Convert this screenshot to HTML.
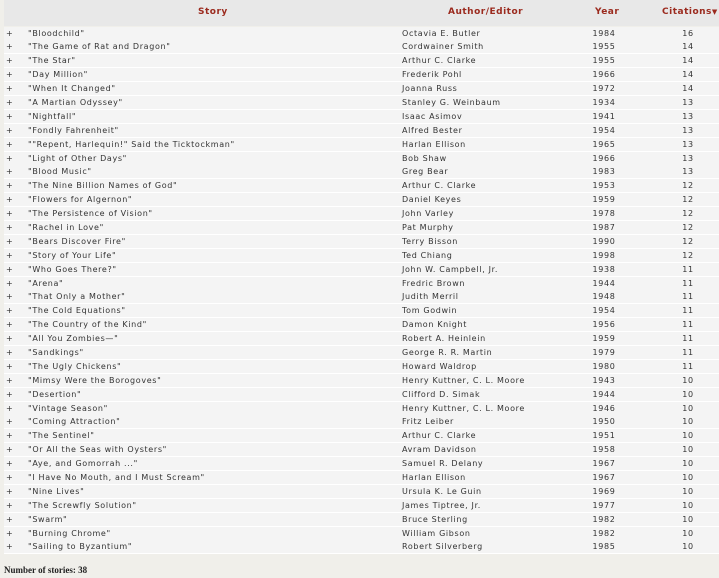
<!DOCTYPE html>
<html><head><meta charset="utf-8"><style>
body{margin:0;width:719px;height:578px;background:#f0efea;overflow:hidden;position:relative;font-family:"DejaVu Sans","Liberation Sans",sans-serif;}
.hd{position:absolute;left:4px;top:0;width:715px;height:26px;background:#e8e8e8;}
.hd span{position:absolute;top:7px;font-size:9px;font-weight:bold;color:#9b2a1e;letter-spacing:0.5px;}
.r{position:absolute;left:4px;width:715px;height:13px;background:#f4f4f4;border-bottom:1px solid #fff;font-size:8px;color:#333;letter-spacing:0.65px;line-height:13px;}
.r span{position:absolute;top:0;white-space:nowrap;}
.p{left:2px}.s{left:24px}.a{left:398px}.y{left:580px;width:40px;text-align:center}.c{left:664px;width:40px;text-align:center}
.ft{position:absolute;left:4px;top:565px;font-family:"Liberation Serif",serif;font-weight:bold;font-size:9px;color:#222;}
</style></head><body>
<div class="hd"><span style="left:194px">Story</span><span style="left:444px">Author/Editor</span><span style="left:591px">Year</span><span style="left:658px">Citations<span style="position:static;font-size:7px">▼</span></span></div>
<div id="t"></div>
<div class="ft">Number of stories: 38</div>
<script>
var d=[["\"Bloodchild\"","Octavia E. Butler",1984,16],["\"The Game of Rat and Dragon\"","Cordwainer Smith",1955,14],["\"The Star\"","Arthur C. Clarke",1955,14],["\"Day Million\"","Frederik Pohl",1966,14],["\"When It Changed\"","Joanna Russ",1972,14],["\"A Martian Odyssey\"","Stanley G. Weinbaum",1934,13],["\"Nightfall\"","Isaac Asimov",1941,13],["\"Fondly Fahrenheit\"","Alfred Bester",1954,13],["\"\"Repent, Harlequin!\" Said the Ticktockman\"","Harlan Ellison",1965,13],["\"Light of Other Days\"","Bob Shaw",1966,13],["\"Blood Music\"","Greg Bear",1983,13],["\"The Nine Billion Names of God\"","Arthur C. Clarke",1953,12],["\"Flowers for Algernon\"","Daniel Keyes",1959,12],["\"The Persistence of Vision\"","John Varley",1978,12],["\"Rachel in Love\"","Pat Murphy",1987,12],["\"Bears Discover Fire\"","Terry Bisson",1990,12],["\"Story of Your Life\"","Ted Chiang",1998,12],["\"Who Goes There?\"","John W. Campbell, Jr.",1938,11],["\"Arena\"","Fredric Brown",1944,11],["\"That Only a Mother\"","Judith Merril",1948,11],["\"The Cold Equations\"","Tom Godwin",1954,11],["\"The Country of the Kind\"","Damon Knight",1956,11],["\"All You Zombies—\"","Robert A. Heinlein",1959,11],["\"Sandkings\"","George R. R. Martin",1979,11],["\"The Ugly Chickens\"","Howard Waldrop",1980,11],["\"Mimsy Were the Borogoves\"","Henry Kuttner, C. L. Moore",1943,10],["\"Desertion\"","Clifford D. Simak",1944,10],["\"Vintage Season\"","Henry Kuttner, C. L. Moore",1946,10],["\"Coming Attraction\"","Fritz Leiber",1950,10],["\"The Sentinel\"","Arthur C. Clarke",1951,10],["\"Or All the Seas with Oysters\"","Avram Davidson",1958,10],["\"Aye, and Gomorrah ...\"","Samuel R. Delany",1967,10],["\"I Have No Mouth, and I Must Scream\"","Harlan Ellison",1967,10],["\"Nine Lives\"","Ursula K. Le Guin",1969,10],["\"The Screwfly Solution\"","James Tiptree, Jr.",1977,10],["\"Swarm\"","Bruce Sterling",1982,10],["\"Burning Chrome\"","William Gibson",1982,10],["\"Sailing to Byzantium\"","Robert Silverberg",1985,10]];
var h="";function e(s){return s.replace(/&/g,"&amp;").replace(/</g,"&lt;")}
d.forEach(function(r,i){h+='<div class="r" style="top:'+(26.5+i*13.89).toFixed(2)+'px"><span class="p">+</span><span class="s">'+e(r[0])+'</span><span class="a">'+e(r[1])+'</span><span class="y">'+r[2]+'</span><span class="c">'+r[3]+'</span></div>'});
document.getElementById("t").innerHTML=h;
</script>
</body></html>
